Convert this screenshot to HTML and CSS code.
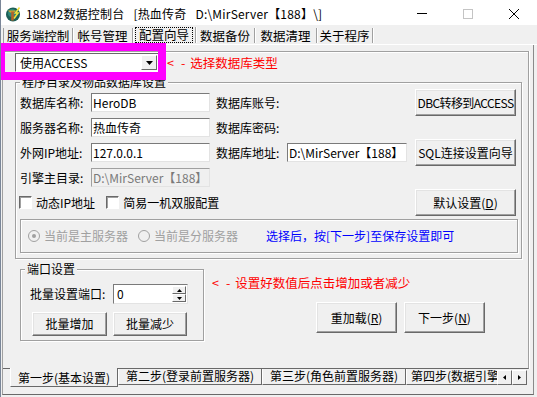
FILE: index.html
```html
<!DOCTYPE html>
<html lang="zh-CN">

<head>
    <meta charset="UTF-8">
    <meta name="viewport" content="width=device-width, initial-scale=1.0">
    <title>188M2数据控制台</title>
    <link rel="stylesheet" href="styles.css">
</head>

<body>
    <div class="window">
        <header class="titlebar">
            <svg class="app-icon" width="16" height="16" viewBox="0 0 16 16">
                <circle cx="8" cy="8.5" r="7" fill="#1d5f57" />
                <circle cx="7" cy="7" r="4" fill="#2f8a7a" />
                <path d="M3 4.5h8l-2 2H5z" fill="#d8a431" />
                <rect x="6.2" y="5.5" width="2.6" height="9" fill="#b4622b" />
                <path d="M14.5 1.5L10.5 7h2.5L9 12.5" fill="none" stroke="#f3e13c" stroke-width="1.6" />
            </svg>
            <span class="title">188M2数据控制台<span class="gap">[热血传奇</span><span class="gap">D:\MirServer【188】\]</span></span>
            <div class="caption">
                <span class="cap-btn">
                    <svg width="10" height="10" viewBox="0 0 10 10"><path d="M0 4.5h10" stroke="#000" /></svg>
                </span>
                <span class="cap-btn">
                    <svg width="10" height="10" viewBox="0 0 10 10"><rect x="0.5" y="0.5" width="9" height="9" fill="none" stroke="#c4c4c4" /></svg>
                </span>
                <span class="cap-btn">
                    <svg width="10" height="10" viewBox="0 0 10 10"><path d="M0 0L10 10M10 0L0 10" stroke="#000" /></svg>
                </span>
            </div>
        </header>

        <nav class="menu-tabs">
            <span class="mtab">服务端控制</span>
            <span class="mtab">帐号管理</span>
            <span class="mtab active"><span class="focus">配置向导</span></span>
            <span class="mtab">数据备份</span>
            <span class="mtab">数据清理</span>
            <span class="mtab">关于程序</span>
        </nav>

        <main class="page">
            <section class="wizard">
                <div class="type-row">
                    <div class="combo">
                        <span class="combo-text">使用ACCESS</span>
                        <span class="combo-btn">
                            <svg width="7" height="4" viewBox="0 0 7 4"><path d="M0 0h7L3.5 4z" fill="#000" /></svg>
                        </span>
                    </div>
                    <span class="hint red"><span class="arrow">&lt;</span><span class="dash">-</span>选择数据库类型</span>
                    <div class="highlight"></div>
                </div>

                <fieldset class="group db-group">
                    <legend>程序目录及物品数据库设置</legend>
                    <div class="form-grid">
                        <label class="lbl">数据库名称:</label>
                        <input class="field" type="text" value="HeroDB">
                        <label class="lbl lbl-2">数据库账号:</label>
                        <span></span>
                        <button class="btn btn-side btn-tight">DBC转移到ACCESS</button>

                        <label class="lbl">服务器名称:</label>
                        <input class="field" type="text" value="热血传奇">
                        <label class="lbl lbl-2">数据库密码:</label>
                        <span></span>
                        <span></span>

                        <label class="lbl">外网IP地址:</label>
                        <input class="field" type="text" value="127.0.0.1">
                        <label class="lbl lbl-2">数据库地址:</label>
                        <input class="field" type="text" value="D:\MirServer【188】">
                        <button class="btn btn-side">SQL连接设置向导</button>

                        <label class="lbl">引擎主目录:</label>
                        <input class="field" type="text" value="D:\MirServer【188】" disabled>
                        <span></span>
                        <span></span>
                        <span></span>

                        <div class="checks">
                            <span class="check"></span><span class="check-text">动态IP地址</span>
                            <span class="check check-2"></span><span class="check-text">简易一机双服配置</span>
                        </div>
                        <button class="btn btn-side">默认设置(<u>D</u>)</button>
                    </div>

                    <div class="radio-box">
                        <svg class="radio" width="12" height="12" viewBox="0 0 12 12">
                            <circle cx="6" cy="6" r="5.5" fill="#f0f0f0" stroke="#a0a0a0" />
                            <circle cx="6" cy="6" r="2" fill="#a0a0a0" />
                        </svg>
                        <span class="radio-text">当前是主服务器</span>
                        <svg class="radio radio-2" width="12" height="12" viewBox="0 0 12 12">
                            <circle cx="6" cy="6" r="5.5" fill="#f0f0f0" stroke="#a0a0a0" />
                        </svg>
                        <span class="radio-text">当前是分服务器</span>
                        <span class="blue">选择后，按[下一步]至保存设置即可</span>
                    </div>
                </fieldset>

                <div class="lower">
                    <fieldset class="group port-group">
                        <legend>端口设置</legend>
                        <div class="port-body">
                            <div class="spin-row">
                                <span class="spin-label">批量设置端口:</span>
                                <div class="spin">
                                    <span class="spin-text">0</span>
                                    <span class="spin-btns">
                                        <span class="spin-btn">
                                            <svg width="5" height="3" viewBox="0 0 5 3"><path d="M2.5 0L5 3H0z" fill="#000" /></svg>
                                        </span>
                                        <span class="spin-btn">
                                            <svg width="5" height="3" viewBox="0 0 5 3"><path d="M0 0h5L2.5 3z" fill="#000" /></svg>
                                        </span>
                                    </span>
                                </div>
                            </div>
                            <div class="port-actions">
                                <button class="btn btn-add">批量增加</button>
                                <button class="btn btn-sub">批量减少</button>
                            </div>
                        </div>
                    </fieldset>

                    <div class="lower-right">
                        <p class="hint red"><span class="arrow">&lt;</span><span class="dash">-</span>设置好数值后点击增加或者减少</p>
                        <div class="actions">
                            <button class="btn btn-main">重加载(<u>R</u>)</button>
                            <button class="btn btn-main">下一步(<u>N</u>)</button>
                        </div>
                    </div>
                </div>
            </section>

            <div class="step-tabs">
                <span class="stab active">第一步(基本设置)</span>
                <span class="stab">第二步(登录前置服务器)</span>
                <span class="stab">第三步(角色前置服务器)</span>
                <span class="stab stab-cut">第四步(数据引擎</span>
                <span class="tab-scroll">
                    <span class="scroll-btn">
                        <svg width="3" height="5" viewBox="0 0 3 5"><path d="M3 0v5L0 2.5z" fill="#000" /></svg>
                    </span>
                    <span class="scroll-btn">
                        <svg width="3" height="5" viewBox="0 0 3 5"><path d="M0 0v5L3 2.5z" fill="#000" /></svg>
                    </span>
                </span>
            </div>
        </main>
    </div>
</body>

</html>
```

FILE: styles.css
```css
* {
    box-sizing: border-box;
}

body {
    margin: 0;
    background: #f0f0f0;
    font: 12px/14px "Noto Sans CJK SC", "Noto Sans", sans-serif;
    color: #000;
}

.window {
    width: 537px;
    height: 397px;
    overflow: hidden;
    background: #f0f0f0;
    border-left: 1px solid #7a8698;
}

/* title bar */
.titlebar {
    height: 25px;
    padding: 3px 0 0 4px;
    display: flex;
    align-items: center;
    background: #fff;
}

.app-icon {
    flex: none;
}

.title {
    margin-left: 5px;
    white-space: nowrap;
    letter-spacing: 0.2px;
}

.title .gap {
    margin-left: 9px;
}

.caption {
    margin-left: auto;
    display: flex;
}

.cap-btn {
    width: 46px;
    height: 22px;
    display: flex;
    align-items: center;
    justify-content: center;
}

/* top tabs */
.menu-tabs {
    height: 20px;
    padding: 3px 0 0 2px;
    display: flex;
    border-bottom: 1px solid #fff;
}

.mtab {
    height: 15px;
    font-size: 12.5px;
    line-height: 15px;
    text-align: center;
    white-space: nowrap;
    border-right: 1px solid #a0a0a0;
    box-shadow: 1px 0 0 #fff;
}

.mtab:nth-child(1) { width: 70px; border-left: 1px solid #a0a0a0; }
.mtab:nth-child(2) { width: 60px; }
.mtab:nth-child(3) { width: 63px; }
.mtab:nth-child(4) { width: 59px; }
.mtab:nth-child(5) { width: 62px; }
.mtab:nth-child(6) { width: 56px; }

.mtab.active {
    margin-top: -1px;
    height: 16px;
}

.focus {
    display: inline-block;
    height: 16px;
    line-height: 14px;
    padding: 0 3px;
    border: 1px dotted #000;
}

/* page */
.page {
    margin-left: 1px;
    width: 532px;
    height: 350px;
    padding-top: 6px;
    border-left: 1px solid #a0a0a0;
    border-right: 1px solid #8a8a8a;
    border-bottom: 1px solid #696969;
}

.wizard {
    width: 526px;
    height: 318px;
    padding-left: 12px;
    border-top: 1px solid #a0a0a0;
    border-right: 1px solid #a0a0a0;
    border-bottom: 1px solid #696969;
    box-shadow: inset 0 1px 0 #fff, 1px 0 0 #fff;
}

.red {
    color: #ff0000;
}

.blue {
    color: #0000ff;
    margin-left: 28px;
}

.hint {
    margin: 0;
    white-space: nowrap;
    font-size: 12.5px;
}

.hint .dash {
    margin: 0 5px 0 7px;
}

/* db type */
.type-row {
    position: relative;
    margin-top: 1px;
    height: 19px;
    display: flex;
    align-items: center;
}

.combo {
    width: 145px;
    height: 19px;
    display: flex;
    align-items: center;
    padding: 0 2px 0 4px;
    background: #fff;
    border: 1px solid;
    border-color: #696969 #fff #fff #696969;
}

.combo-btn {
    margin-left: auto;
    width: 16px;
    height: 15px;
    display: flex;
    align-items: center;
    justify-content: center;
    background: #f0f0f0;
    border: 1px solid;
    border-color: #fff #696969 #696969 #fff;
}

.type-row .hint {
    margin-left: 7px;
}

.highlight {
    position: absolute;
    left: -15px;
    top: -10px;
    width: 166px;
    height: 37px;
    border: 8px solid #ff00ff;
    border-left-width: 5px;
    z-index: 2;
    pointer-events: none;
}

/* group boxes */
.group {
    margin: 0;
    min-width: 0;
    border: 1px solid #a0a0a0;
    box-shadow: inset 1px 1px 0 #fff, 1px 1px 0 #fff;
}

.group legend {
    padding: 0 2px;
    line-height: 14px;
    background: #f0f0f0;
}

.db-group {
    margin-top: 3px;
    width: 507px;
    padding: 1px 3px 5px 4px;
}

.form-grid {
    display: grid;
    grid-template-columns: 71px 119px 77px 120px 109px;
    grid-auto-rows: 25px;
    align-items: center;
}

.lbl-2 {
    padding-left: 6px;
}

.field {
    width: 100%;
    height: 19px;
    padding: 0 1px;
    font: inherit;
    line-height: 17px;
    color: #000;
    background: #fff;
    border: 1px solid;
    border-color: #7a7a7a #e3e3e3 #e3e3e3 #7a7a7a;
    outline: none;
}

.field:disabled {
    background: #f0f0f0;
    color: #7a7a7a;
    border-color: #a0a0a0 #e3e3e3 #e3e3e3 #a0a0a0;
}

.btn {
    padding: 0;
    font: inherit;
    color: #000;
    background: #f0f0f0;
    border: 1px solid;
    border-color: #fff #696969 #696969 #fff;
    box-shadow: inset -1px -1px 0 #a0a0a0, inset 1px 1px 0 #e3e3e3;
    white-space: nowrap;
}

.btn-side {
    justify-self: end;
    width: 101px;
    height: 27px;
}

.btn-tight {
    letter-spacing: -0.6px;
}

.checks {
    grid-column: 1 / 5;
    display: flex;
    align-items: center;
}

.check {
    width: 13px;
    height: 13px;
    margin-left: -1px;
    background: #fff;
    border: 1px solid;
    border-color: #696969 #fff #fff #696969;
    box-shadow: inset 1px 1px 0 #a0a0a0;
}

.check-2 {
    margin-left: 11px;
}

.check-text {
    margin-left: 4px;
}

.radio-box {
    margin-top: 4px;
    width: 498px;
    height: 34px;
    display: flex;
    align-items: center;
    padding-left: 7px;
    border: 1px solid #a0a0a0;
    box-shadow: inset 1px 1px 0 #fff, 1px 1px 0 #fff;
}

.radio-2 {
    margin-left: 10px;
}

.radio-text {
    margin-left: 4px;
    color: #a0a0a0;
}

/* lower part */
.lower {
    margin-top: 3px;
    display: flex;
    align-items: flex-start;
}

.port-group {
    margin-left: 5px;
    width: 184px;
    padding: 0 8px 4px 4px;
}

.port-body {
    margin-left: 5px;
}

.spin-row {
    margin-top: 8px;
    height: 20px;
    display: flex;
    align-items: center;
}

.spin-label {
    width: 83px;
}

.spin {
    width: 75px;
    height: 20px;
    display: flex;
    align-items: center;
    padding: 0 1px 0 3px;
    background: #fff;
    border: 1px solid;
    border-color: #7a7a7a #e3e3e3 #e3e3e3 #7a7a7a;
}

.spin-btns {
    margin-left: auto;
    display: flex;
    flex-direction: column;
}

.spin-btn {
    width: 14px;
    height: 8px;
    display: flex;
    align-items: center;
    justify-content: center;
    background: #f0f0f0;
    border: 1px solid;
    border-color: #fff #696969 #696969 #fff;
}

.port-actions {
    margin-top: 8px;
    display: flex;
    gap: 6px;
}

.btn-add {
    margin-left: 2px;
    width: 75px;
    height: 24px;
}

.btn-sub {
    width: 74px;
    height: 24px;
}

.lower-right {
    margin-left: 8px;
}

.lower-right .hint {
    margin-top: 14px;
}

.actions {
    margin-top: 12px;
    padding-left: 104px;
    display: flex;
    gap: 7px;
}

.btn-main {
    width: 81px;
    height: 31px;
}

/* bottom step tabs */
.step-tabs {
    margin-top: -1px;
    padding-left: 7px;
    display: flex;
    align-items: flex-start;
}

.stab {
    height: 16px;
    margin-top: 1px;
    line-height: 14px;
    text-align: center;
    white-space: nowrap;
    border-left: 1px solid #fff;
    border-right: 1px solid #696969;
    border-bottom: 1px solid #696969;
}

.stab.active {
    position: relative;
    width: 108px;
    height: 19px;
    margin-top: 0;
    padding-top: 3px;
    background: #f0f0f0;
}

.stab:nth-child(2) { width: 144px; }
.stab:nth-child(3) { width: 144px; }

.stab-cut {
    width: 91px;
    text-align: left;
    padding-left: 4px;
    border-right: none;
}

.tab-scroll {
    display: flex;
    margin-top: 2px;
}

.scroll-btn {
    width: 15px;
    height: 15px;
    display: flex;
    align-items: center;
    justify-content: center;
    background: #f0f0f0;
    border: 1px solid;
    border-color: #fff #696969 #696969 #fff;
}
```
